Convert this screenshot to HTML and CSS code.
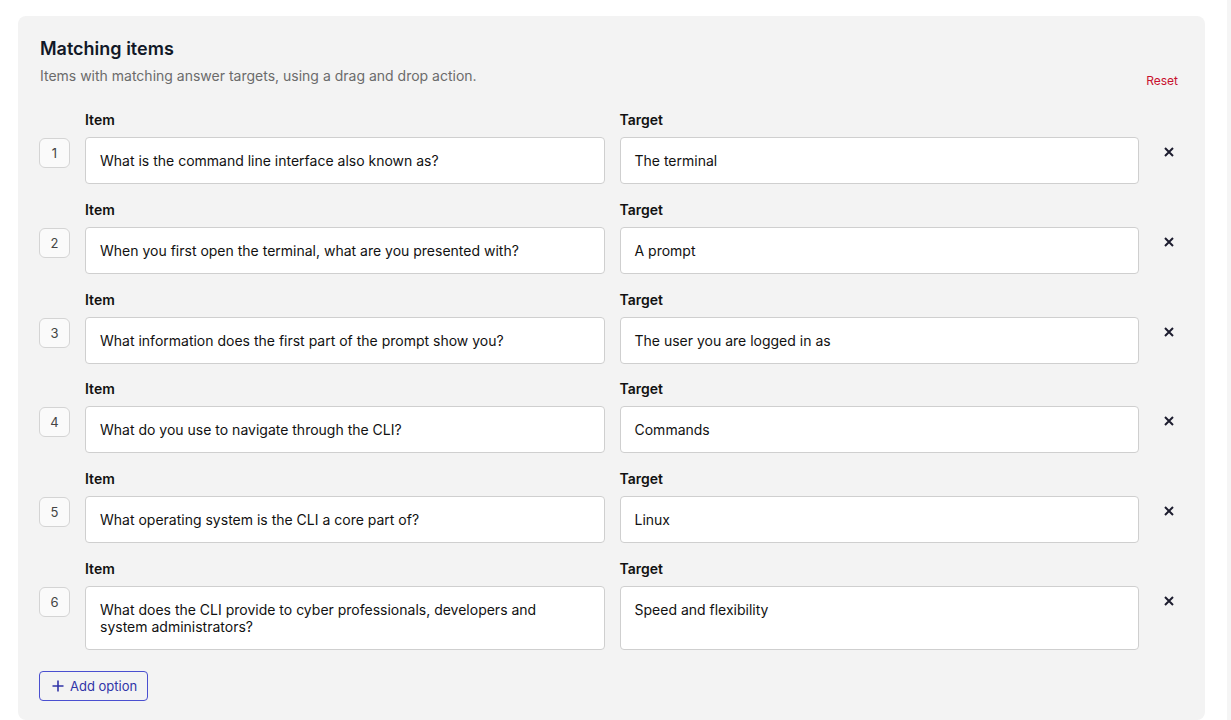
FILE: index.html
```html
<!DOCTYPE html>
<html lang="en">
<head>
    <meta charset="UTF-8">
    <meta name="viewport" content="width=device-width, initial-scale=1.0">
    <title>Matching items</title>
    <link rel="stylesheet" href="styles.css">
</head>
<body>
    <div class="page">
        <section class="card">
            <div class="card-head">
                <div>
                    <h2 class="title">Matching items</h2>
                    <p class="subtitle">Items with matching answer targets, using a drag and drop action.</p>
                </div>
                <a class="reset" href="#">Reset</a>
            </div>

            <div class="pairs">
                <div class="pair">
                    <span class="label label-item">Item</span>
                    <span class="label label-target">Target</span>
                    <span class="num">1</span>
                    <div class="field">What is the command line interface also known as?</div>
                    <div class="field">The terminal</div>
                    <button class="remove" type="button"><svg viewBox="0 0 10 10"><path d="M1 1L9 9M9 1L1 9"/></svg></button>
                </div>
                <div class="pair">
                    <span class="label label-item">Item</span>
                    <span class="label label-target">Target</span>
                    <span class="num">2</span>
                    <div class="field">When you first open the terminal, what are you presented with?</div>
                    <div class="field">A prompt</div>
                    <button class="remove" type="button"><svg viewBox="0 0 10 10"><path d="M1 1L9 9M9 1L1 9"/></svg></button>
                </div>
                <div class="pair">
                    <span class="label label-item">Item</span>
                    <span class="label label-target">Target</span>
                    <span class="num">3</span>
                    <div class="field">What information does the first part of the prompt show you?</div>
                    <div class="field">The user you are logged in as</div>
                    <button class="remove" type="button"><svg viewBox="0 0 10 10"><path d="M1 1L9 9M9 1L1 9"/></svg></button>
                </div>
                <div class="pair">
                    <span class="label label-item">Item</span>
                    <span class="label label-target">Target</span>
                    <span class="num">4</span>
                    <div class="field">What do you use to navigate through the CLI?</div>
                    <div class="field">Commands</div>
                    <button class="remove" type="button"><svg viewBox="0 0 10 10"><path d="M1 1L9 9M9 1L1 9"/></svg></button>
                </div>
                <div class="pair">
                    <span class="label label-item">Item</span>
                    <span class="label label-target">Target</span>
                    <span class="num">5</span>
                    <div class="field">What operating system is the CLI a core part of?</div>
                    <div class="field">Linux</div>
                    <button class="remove" type="button"><svg viewBox="0 0 10 10"><path d="M1 1L9 9M9 1L1 9"/></svg></button>
                </div>
                <div class="pair">
                    <span class="label label-item">Item</span>
                    <span class="label label-target">Target</span>
                    <span class="num">6</span>
                    <div class="field">What does the CLI provide to cyber professionals, developers and system administrators?</div>
                    <div class="field">Speed and flexibility</div>
                    <button class="remove" type="button"><svg viewBox="0 0 10 10"><path d="M1 1L9 9M9 1L1 9"/></svg></button>
                </div>
            </div>

            <button class="add" type="button">
                <svg viewBox="0 0 12 12"><path d="M6 0.5V11.5M0.5 6H11.5"/></svg>
                Add option
            </button>
        </section>
        <div class="edge"></div>
    </div>
</body>
</html>
```

FILE: styles.css
```css
*{box-sizing:border-box;}
body{margin:0;background:#fff;font-family:Inter,"Noto Sans",sans-serif;color:#111;}
.page{display:flex;align-items:flex-start;min-height:100vh;padding:16px 0 0 18px;}
.edge{width:4px;align-self:stretch;background:#f5f5f5;margin-top:-16px;}

/* grey panel */
.card{flex:1;margin-right:22px;background:#f3f3f3;border-radius:8px;padding:21px 22px 19px 21px;}
.card-head{display:flex;justify-content:space-between;align-items:flex-end;}
.title{margin:0 0 0 1px;font-size:18px;line-height:24px;font-weight:600;color:#111827;}
.subtitle{margin:5px 0 0 1px;font-size:14px;line-height:20px;color:#6b6b6b;}
.reset{font-size:12px;line-height:18px;color:#c8102e;text-decoration:none;margin-bottom:-4px;margin-right:5px;}

/* item / target rows */
.pairs{margin-top:25px;display:flex;flex-direction:column;gap:16.8px;}
.pair{display:grid;grid-template-columns:31px 1fr 1fr 29px;column-gap:15px;row-gap:8px;align-items:start;}
.label{font-size:14px;line-height:18px;font-weight:600;color:#111;}
.label-item{grid-column:2;}
.label-target{grid-column:3;}
.num{grid-column:1;grid-row:2;height:30px;margin-top:1px;display:flex;align-items:center;justify-content:center;background:#fafafa;border:1px solid #d4d4d4;border-radius:6px;font-size:13px;color:#444;}
.field{grid-row:2;align-self:stretch;background:#fff;border:1px solid #cfcfcf;border-radius:4px;padding:14px 30px 14px 14px;font-size:14px;line-height:17px;min-height:47px;}
.remove{grid-row:2;grid-column:4;justify-self:center;margin-top:10px;padding:0;border:0;background:none;width:10px;height:10px;display:block;cursor:pointer;}
.remove svg{display:block;width:10px;height:10px;stroke:#1c1c2e;stroke-width:2;fill:none;}

/* add button */
.add{margin-top:21px;display:flex;align-items:center;gap:6px;height:30px;padding:0 10px 0 12px;background:#fff0;border:1px solid #4a4fd0;border-radius:4px;font-family:inherit;font-size:13px;color:#3134a8;cursor:pointer;}
.add svg{width:12px;height:12px;stroke:#3134a8;stroke-width:1.6;fill:none;}
```
